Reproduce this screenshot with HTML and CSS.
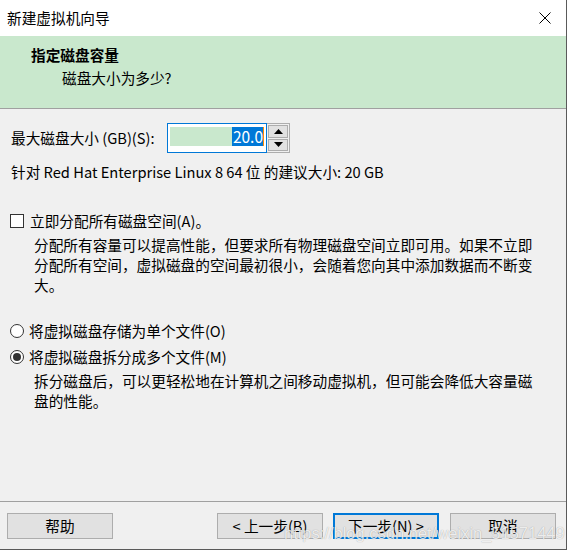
FILE: index.html
```html
<!DOCTYPE html>
<html lang="zh-CN">
<head>
<meta charset="utf-8">
<title>新建虚拟机向导</title>
<link rel="stylesheet" href="styles.css">
</head>
<body>
<div class="window">
  <div class="titlebar">
    <span class="title">新建虚拟机向导</span>
    <svg class="close" width="12" height="12" viewBox="0 0 12 12"><path d="M0.5 0.5 L11.5 11.5 M11.5 0.5 L0.5 11.5" stroke="#000" stroke-width="1" fill="none"/></svg>
  </div>
  <div class="header">
    <div class="h-title">指定磁盘容量</div>
    <div class="h-sub">磁盘大小为多少?</div>
  </div>
  <div class="content">
    <div class="size-row">
      <span class="size-label">最大磁盘大小 (GB)(S):</span>
      <div class="spin">
        <div class="spin-field">
          <div class="field-fill"><span class="sel">20.0</span><span class="caret"></span></div>
        </div>
        <div class="spin-btns">
          <div class="spin-btn"><svg width="9" height="5" viewBox="0 0 9 5"><path d="M4.5 0 L9 5 L0 5 Z" fill="#000"/></svg></div>
          <div class="spin-btn"><svg width="9" height="5" viewBox="0 0 9 5"><path d="M0 0 L9 0 L4.5 5 Z" fill="#000"/></svg></div>
        </div>
      </div>
    </div>
    <div class="recommend">针对 Red Hat Enterprise Linux 8 64 位 的建议大小: 20 GB</div>
    <div class="option check-row">
      <span class="checkbox"></span>
      <span class="opt-label">立即分配所有磁盘空间(A)。</span>
    </div>
    <div class="desc">分配所有容量可以提高性能，但要求所有物理磁盘空间立即可用。如果不立即分配所有空间，虚拟磁盘的空间最初很小，会随着您向其中添加数据而不断变大。</div>
    <div class="option radio-row first-radio">
      <span class="radio"></span>
      <span class="opt-label">将虚拟磁盘存储为单个文件(O)</span>
    </div>
    <div class="option radio-row">
      <span class="radio checked"></span>
      <span class="opt-label">将虚拟磁盘拆分成多个文件(M)</span>
    </div>
    <div class="desc">拆分磁盘后，可以更轻松地在计算机之间移动虚拟机，但可能会降低大容量磁盘的性能。</div>
  </div>
  <div class="footer">
    <button class="btn">帮助</button>
    <div class="spacer"></div>
    <button class="btn">&lt; 上一步(B)</button>
    <button class="btn default">下一步(N) &gt;</button>
    <button class="btn cancel">取消</button>
    <span class="watermark">https://blog.csdn.net/weixin_51571449</span>
  </div>
</div>
</body>
</html>
```

FILE: styles.css
```css
* { box-sizing: border-box; }
html, body {
  margin: 0;
  padding: 0;
  background: #f0f0f0;
}
body {
  font-family: "Noto Sans CJK SC", "Noto Sans", sans-serif;
  font-size: 14.67px;
  color: #000;
}
.window {
  width: 567px;
  height: 550px;
  background: #f0f0f0;
  border-right: 1px solid #5a5a5a;
  border-bottom: 1px solid #5a5a5a;
  display: flex;
  flex-direction: column;
  position: relative;
  overflow: hidden;
}
.titlebar {
  height: 36px;
  background: #fff;
  display: flex;
  align-items: center;
  padding-left: 7px;
  padding-right: 15px;
  flex: none;
}
.title {
  flex: 1;
  line-height: 20px;
}
.header {
  height: 73px;
  background: #c9e8cd;
  border-bottom: 1px solid #a0a0a0;
  padding-top: 8px;
  flex: none;
}
.h-title {
  font-weight: bold;
  padding-left: 31px;
  line-height: 22px;
}
.h-sub {
  padding-left: 62px;
  line-height: 22px;
  margin-top: 1px;
}
.content {
  flex: 1;
  padding: 14px 0 0 0;
}
.size-row {
  display: flex;
  align-items: center;
  padding-left: 11px;
  height: 30px;
}
.size-label {
  width: 156px;
  line-height: 20px;
}
.spin {
  display: flex;
  height: 30px;
}
.spin-field {
  width: 100px;
  height: 30px;
  border: 1px solid #0078d7;
  background: #fff;
  padding: 3px 2px 0 2px;
}
.field-fill {
  height: 19px;
  background: #c9e8cd;
  display: flex;
  justify-content: flex-end;
  align-items: stretch;
}
.sel {
  background: #0078d7;
  color: #fff;
  line-height: 19px;
  font-size: 15.5px;
  padding-left: 1px;
}
.caret {
  width: 1px;
  background: #ff8c00;
}
.spin-btns {
  width: 23px;
  border: 1px solid #adadad;
  border-left: none;
  display: flex;
  flex-direction: column;
  padding: 1px;
  gap: 1px;
}
.spin-btn {
  flex: 1;
  background: #e1e1e1;
  border: 1px solid #adadad;
  display: flex;
  align-items: center;
  justify-content: center;
}
.recommend {
  padding-left: 11px;
  line-height: 20px;
  margin-top: 9px;
}
.option {
  display: flex;
  align-items: center;
  padding-left: 10px;
  height: 20px;
}
.check-row {
  margin-top: 29px;
}
.checkbox {
  width: 14px;
  height: 14px;
  border: 1px solid #333;
  background: #fff;
  flex: none;
}
.radio {
  width: 14px;
  height: 14px;
  border: 1px solid #333;
  border-radius: 50%;
  background: #fff;
  flex: none;
  display: flex;
  align-items: center;
  justify-content: center;
}
.radio.checked::after {
  content: "";
  width: 8px;
  height: 8px;
  border-radius: 50%;
  background: #333;
}
.opt-label {
  margin-left: 6px;
  line-height: 20px;
}
.radio-row .opt-label {
  margin-left: 5px;
}
.desc {
  margin-top: 4px;
  padding-left: 34px;
  padding-right: 26px;
  line-height: 20px;
}
.first-radio {
  margin-top: 26px;
}
.radio-row + .radio-row {
  margin-top: 6px;
}
.footer {
  height: 48px;
  border-top: 1px solid #a0a0a0;
  display: flex;
  align-items: flex-start;
  gap: 10px;
  padding: 11px 10px 0 7px;
  flex: none;
  position: relative;
}
.spacer { flex: 1; }
.btn {
  font-family: inherit;
  font-size: 14.67px;
  width: 106px;
  height: 26px;
  flex: none;
  background: #e1e1e1;
  border: 1px solid #adadad;
  padding: 0;
  color: #000;
  line-height: 22px;
}
.btn.default {
  border: 2px solid #0078d7;
}
.btn.cancel {
  margin-left: 1px;
}
.watermark {
  position: absolute;
  left: 284px;
  top: 22px;
  font-family: "Liberation Sans", Arial, sans-serif;
  font-size: 16.5px;
  color: rgba(255, 255, 255, 0.82);
  text-shadow: 0 0 1px rgba(0, 0, 0, 0.35);
  pointer-events: none;
  white-space: nowrap;
}
```
